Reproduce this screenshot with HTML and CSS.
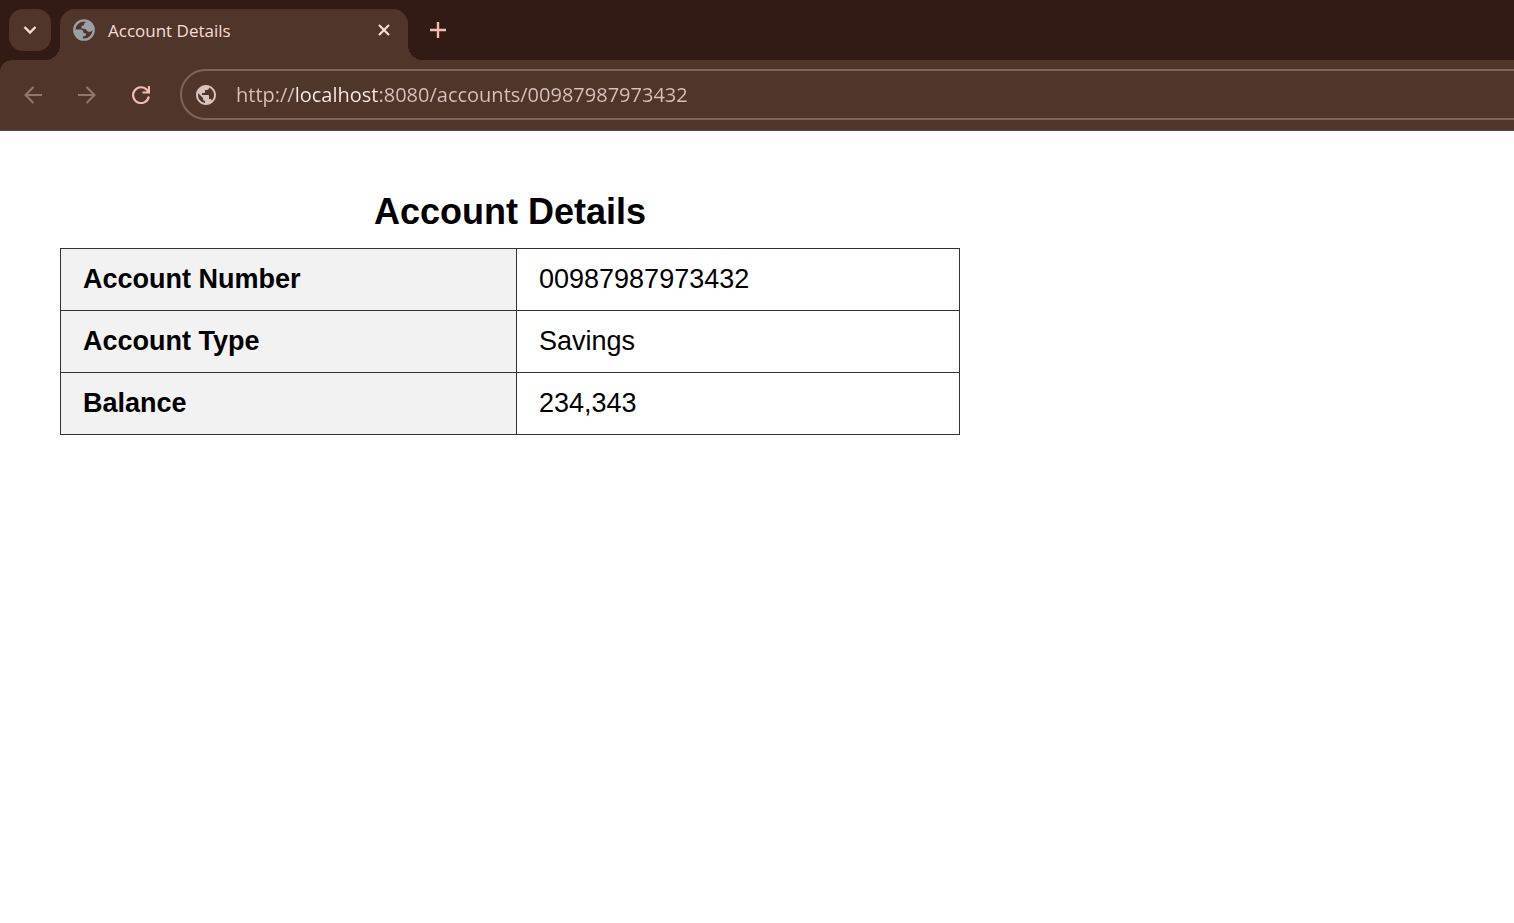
FILE: index.html
```html
<!DOCTYPE html>
<html lang="en">
<head>
<meta charset="utf-8">
<title>Account Details</title>
<link rel="stylesheet" href="styles.css">
</head>
<body>
<header class="browser">
  <div class="tab-strip">
    <button class="tab-search" type="button" aria-label="Search tabs">
      <svg width="14" height="10" viewBox="0 0 14 10"><path d="M1.500 2L7 7.500 12.500 2" fill="none" stroke="currentColor" stroke-width="2.400"/></svg>
    </button>
    <div class="tab">
      <svg class="favicon" width="22" height="22" viewBox="0 0 22 22">
        <circle cx="11" cy="11" r="9.700" fill="none" stroke="currentColor" stroke-width="2.300"/>
        <path d="M10 1.500C15 1 20 5 20.500 10C19 12.500 17.500 13 15.500 12.800C13.500 12.500 14 10.300 12 10L8.500 9.500V7L11 6.300V4.500L13 3.200ZM1.500 10.500L7 10.500C10 10.500 10.500 12.500 10.500 14L13 14.500V16.500L10 17.500V20.500C5 20 1.500 16 1.500 10.500Z" fill="currentColor"/>
      </svg>
      <span class="tab-title">Account Details</span>
      <button class="tab-close" type="button" aria-label="Close tab">
        <svg width="12" height="12" viewBox="0 0 12 12"><path d="M1 1L11 11M11 1L1 11" fill="none" stroke="currentColor" stroke-width="2.200"/></svg>
      </button>
    </div>
    <button class="new-tab" type="button" aria-label="New tab">
      <svg width="16" height="16" viewBox="0 0 16 16"><path d="M8 0V16M0 8H16" fill="none" stroke="currentColor" stroke-width="2.400"/></svg>
    </button>
  </div>
  <div class="toolbar">
    <button class="nav" type="button" aria-label="Back" disabled>
      <svg width="18" height="18" viewBox="0 0 18 18"><path d="M18 9H1.500M9.500 1L1.500 9L9.500 17" fill="none" stroke="currentColor" stroke-width="2"/></svg>
    </button>
    <button class="nav" type="button" aria-label="Forward" disabled>
      <svg width="18" height="18" viewBox="0 0 18 18"><path d="M0 9H16.500M8.500 1L16.500 9L8.500 17" fill="none" stroke="currentColor" stroke-width="2"/></svg>
    </button>
    <button class="nav reload" type="button" aria-label="Reload">
      <svg width="18" height="18" viewBox="0 0 18 18"><path d="M16.800 10.500A7.900 7.900 0 1 1 15 4L17 6M17 0V6.500H10.500" fill="none" stroke="currentColor" stroke-width="2.200"/></svg>
    </button>
    <div class="address">
      <svg width="24" height="24" viewBox="0 0 24 24"><path fill="currentColor" d="M12 2C6.480 2 2 6.480 2 12s4.480 10 10 10 10-4.480 10-10S17.520 2 12 2zm-1 17.930c-3.950-.490-7-3.850-7-7.930 0-.620.080-1.210.210-1.790L9 15v1c0 1.100.9 2 2 2v1.930zm6.900-2.540c-.260-.810-1-1.390-1.900-1.390h-1v-3c0-.550-.450-1-1-1H8v-2h2c.550 0 1-.450 1-1V7h2c1.100 0 2-.9 2-2v-.410c2.930 1.190 5 4.060 5 7.410 0 2.080-.8 3.970-2.100 5.390z"/></svg>
      <input class="url" type="text" aria-label="Address" spellcheck="false" value="http://localhost:8080/accounts/00987987973432">
    </div>
  </div>
</header>
<main class="page">
  <table class="account">
    <caption>Account Details</caption>
    <tbody>
      <tr><th scope="row">Account Number</th><td>00987987973432</td></tr>
      <tr><th scope="row">Account Type</th><td>Savings</td></tr>
      <tr><th scope="row">Balance</th><td>234,343</td></tr>
    </tbody>
  </table>
</main>
</body>
</html>
```
FILE: styles.css
```css
* { box-sizing: border-box; }
body { margin: 0; background: #fff; color: #000; font-family: "Liberation Sans", Arial, sans-serif; overflow-x: hidden; }
svg { display: block; flex: none; }
button { border: 0; padding: 0; background: none; color: inherit; display: flex; align-items: center; justify-content: center; flex: none; }

.browser { background: #321b14; font-family: "Open Sans", "Noto Sans", sans-serif; }
.tab-strip { display: flex; padding: 9px 9px 0; height: 60px; }
.tab-search { width: 42px; height: 42px; border-radius: 14px; background: #50352b; color: #f7ddd5; }
.tab { position: relative; display: flex; align-items: center; width: 348px; margin-left: 9px; padding: 0 16px 9px 13px; background: #50352b; border-radius: 15px 15px 0 0; color: #f7ddd5; }
.tab::before, .tab::after { content: ""; position: absolute; bottom: 0; width: 15px; height: 15px; }
.tab::before { right: 100%; background: radial-gradient(circle at 0 0, transparent 15px, #50352b 15px); }
.tab::after { left: 100%; background: radial-gradient(circle at 100% 0, transparent 15px, #50352b 15px); }
.favicon { color: #9aa0a6; }
.tab-title { flex: 1; margin-left: 13px; padding-top: 2px; font-size: 17px; line-height: 24px; white-space: nowrap; }
.tab-close { width: 16px; height: 24px; }
.new-tab { width: 42px; height: 42px; margin-left: 9px; color: #eebfb0; }

.toolbar { display: flex; align-items: center; height: 71px; padding: 9px 0 10px 6px; background: #50352b; border-bottom: 1px solid #5c453c; border-top-left-radius: 12px; color: #eebfb0; }
.nav { width: 54px; height: 42px; padding-top: 1px; }
.nav:disabled { color: #94766d; }
.address { display: flex; align-items: center; flex: 1; height: 51px; margin: 0 -30px 0 12px; padding: 1px 12px 0; border: 2px solid #7b655e; border-radius: 26px; color: #d8c2bc; }
.url { flex: 1; min-width: 0; margin-left: 18px; padding: 0; border: 0; outline: 0; font: 20px/30px "Open Sans", "Noto Sans", sans-serif; color: transparent; background: linear-gradient(90deg, #d8c2bc 59px, #ffede8 59px 142px, #d8c2bc 142px); -webkit-background-clip: text; background-clip: text; }

.page { padding: 60px; }
.account { width: 100%; max-width: 900px; border-collapse: collapse; font-size: 27px; line-height: 31px; }
.account caption { padding-bottom: 15px; font-size: 36px; line-height: 42px; font-weight: bold; }
.account th, .account td { padding: 15px 22px; border: 1px solid #333; text-align: left; }
.account th { width: 456px; background: #f2f2f2; }
```
